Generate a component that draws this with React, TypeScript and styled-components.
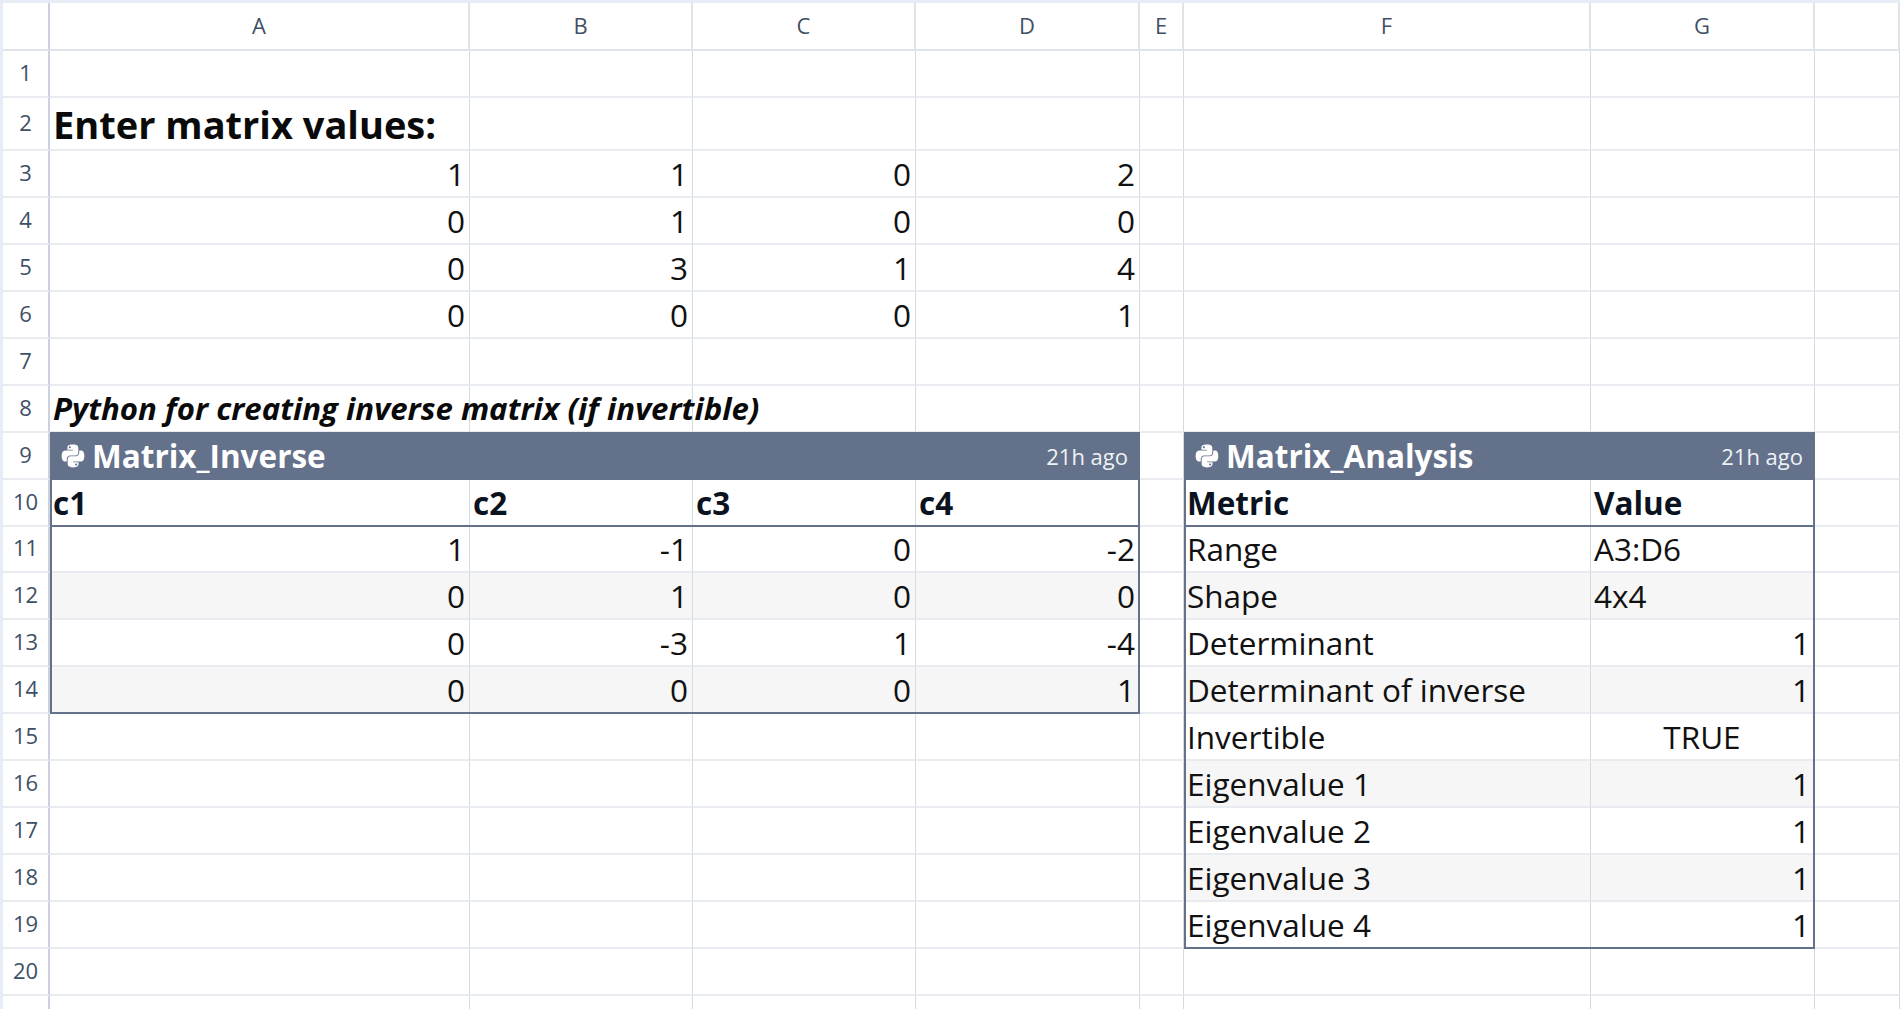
import React from "react";
import styled, { createGlobalStyle } from "styled-components";
import { FaPython } from "react-icons/fa";

const GlobalStyle = createGlobalStyle`
    html, body {
        margin: 0;
        height: 100%;
        overflow: hidden;
        background: #ffffff;
        font-family: "Open Sans", "Noto Sans", sans-serif;
    }
`

const Page = styled.div`
    height: 100vh;
    box-sizing: border-box;
    overflow: hidden;
    padding: 3px 0 0 3px;
    background: #e6edf6;
`

const Sheet = styled.div`
    display: grid;
    grid-template-columns: 47px 420px 223px 223px 224px 44px 407px 224px 1fr;
    grid-template-rows: 48px 47px 53px;
    grid-auto-rows: 46.94px;
    background: #ffffff;
`

const HeadCell = styled.div<{ $corner?: boolean }>`
    display: flex;
    align-items: center;
    justify-content: center;
    box-sizing: border-box;
    padding-bottom: 2px;
    font-size: 22px;
    color: #3f4f66;
    border-right: 2px solid ${(p) => (p.$corner ? "#ccd2dd" : "#dfe3ea")};
    border-bottom: 2px solid #dfe3ea;
`

const RowHead = styled.div<{ $row: number }>`
    grid-row: ${(p) => p.$row + 1};
    grid-column: 1;
    display: flex;
    align-items: center;
    justify-content: center;
    box-sizing: border-box;
    padding-bottom: 3px;
    font-size: 22px;
    color: #3f4f66;
    border-right: 2px solid #ccd2dd;
    border-bottom: 2px solid #e8ebef;
`

const Cell = styled.div<{ $row: number; $col: number; $align?: string; $raised?: boolean; $striped?: boolean }>`
    grid-row: ${(p) => p.$row + 1};
    grid-column: ${(p) => p.$col + 2};
    display: flex;
    align-items: center;
    justify-content: ${(p) => p.$align || "flex-start"};
    box-sizing: border-box;
    min-width: 0;
    padding: 0 4px 0 3px;
    font-size: 31.5px;
    color: #111111;
    white-space: nowrap;
    background: ${(p) => (p.$striped ? "#f6f6f6" : "transparent")};
    border-right: 1px solid #d5d9e0;
    border-bottom: 2px solid #e8ebef;
    z-index: ${(p) => (p.$raised ? 1 : 0)};
`

const Heading = styled.span`
    font-size: 38px;
    font-weight: 700;
    color: #0a0a0a;
`

const Note = styled.span`
    font-size: 31.2px;
    font-weight: 700;
    font-style: italic;
    color: #0a0a0a;
`

const ColumnName = styled.span`
    font-weight: 700;
    color: #0b1220;
`

const TableTitle = styled.div<{ $area: string }>`
    grid-area: ${(p) => p.$area};
    z-index: 2;
    display: flex;
    align-items: center;
    box-sizing: border-box;
    margin-top: -1px;
    padding: 0 12px 0 10px;
    background: #64718a;
    color: #ffffff;
`

const TitleName = styled.span`
    margin-left: 6px;
    font-size: 31.5px;
    font-weight: 700;
`

const TitleAge = styled.span`
    margin-left: auto;
    font-size: 22px;
    color: #eef1f5;
`

const TableFrame = styled.div<{ $area: string }>`
    grid-area: ${(p) => p.$area};
    z-index: 2;
    box-sizing: border-box;
    border: 2px solid #64718a;
    border-top: none;
`

const HeaderRule = styled.div<{ $area: string }>`
    grid-area: ${(p) => p.$area};
    z-index: 2;
    align-self: end;
    height: 2px;
    background: #64718a;
`

type CellValue = { text: string; align?: string; bold?: boolean };

const columns = ["A", "B", "C", "D", "E", "F", "G", ""];
const rowCount = 21;

const right = (text: string): CellValue => ({ text, align: "flex-end" });
const left = (text: string): CellValue => ({ text });
const bold = (text: string): CellValue => ({ text, bold: true });

const matrix = [
    ["1", "1", "0", "2"],
    ["0", "1", "0", "0"],
    ["0", "3", "1", "4"],
    ["0", "0", "0", "1"],
];

const inverse = [
    ["1", "-1", "0", "-2"],
    ["0", "1", "0", "0"],
    ["0", "-3", "1", "-4"],
    ["0", "0", "0", "1"],
];

const analysis: [string, CellValue][] = [
    ["Range", left("A3:D6")],
    ["Shape", left("4x4")],
    ["Determinant", right("1")],
    ["Determinant of inverse", right("1")],
    ["Invertible", { text: "TRUE", align: "center" }],
    ["Eigenvalue 1", right("1")],
    ["Eigenvalue 2", right("1")],
    ["Eigenvalue 3", right("1")],
    ["Eigenvalue 4", right("1")],
];

// row number -> column index -> cell
const buildCells = () => {
    const cells: Record<number, Record<number, CellValue>> = {};
    const put = (row: number, col: number, value: CellValue) => {
        cells[row] = cells[row] || {};
        cells[row][col] = value;
    };
    matrix.forEach((r, i) => r.forEach((v, j) => put(3 + i, j, right(v))));
    ["c1", "c2", "c3", "c4"].forEach((v, j) => put(10, j, bold(v)));
    inverse.forEach((r, i) => r.forEach((v, j) => put(11 + i, j, right(v))));
    put(10, 5, bold("Metric"));
    put(10, 6, bold("Value"));
    analysis.forEach(([name, value], i) => {
        put(11 + i, 5, left(name));
        put(11 + i, 6, value);
    });
    return cells;
};

const isStriped = (row: number, col: number) => {
    if (row % 2 !== 0) return false;
    if (col <= 3) return row >= 12 && row <= 14;
    if (col === 5 || col === 6) return row >= 12 && row <= 18;
    return false;
};

const App = (): JSX.Element => {
    const cells = buildCells();
    const rows = Array.from({ length: rowCount }, (_, i) => i + 1);

    return (
        <>
            <GlobalStyle />
            <Page>
                <Sheet>
                    <HeadCell $corner />
                    {columns.map((name, i) => (
                        <HeadCell key={i}>{name}</HeadCell>
                    ))}
                    {rows.map((row) => (
                        <React.Fragment key={row}>
                            <RowHead $row={row}>{row}</RowHead>
                            {columns.map((_, col) => {
                                const value = cells[row]?.[col];
                                return (
                                    <Cell
                                        key={col}
                                        $row={row}
                                        $col={col}
                                        $align={value?.align}
                                        $striped={isStriped(row, col)}
                                        $raised={col === 0 && (row === 2 || row === 8)}
                                    >
                                        {row === 2 && col === 0 && <Heading>Enter matrix values:</Heading>}
                                        {row === 8 && col === 0 && <Note>Python for creating inverse matrix (if invertible)</Note>}
                                        {value && (value.bold ? <ColumnName>{value.text}</ColumnName> : value.text)}
                                    </Cell>
                                );
                            })}
                        </React.Fragment>
                    ))}

                    <TableTitle $area="10 / 2 / 11 / 6">
                        <FaPython size={26} />
                        <TitleName>Matrix_Inverse</TitleName>
                        <TitleAge>21h ago</TitleAge>
                    </TableTitle>
                    <TableFrame $area="11 / 2 / 16 / 6" />
                    <HeaderRule $area="11 / 2 / 12 / 6" />

                    <TableTitle $area="10 / 7 / 11 / 9">
                        <FaPython size={26} />
                        <TitleName>Matrix_Analysis</TitleName>
                        <TitleAge>21h ago</TitleAge>
                    </TableTitle>
                    <TableFrame $area="11 / 7 / 21 / 9" />
                    <HeaderRule $area="11 / 7 / 12 / 9" />
                </Sheet>
            </Page>
        </>
    );
};

export default App;
